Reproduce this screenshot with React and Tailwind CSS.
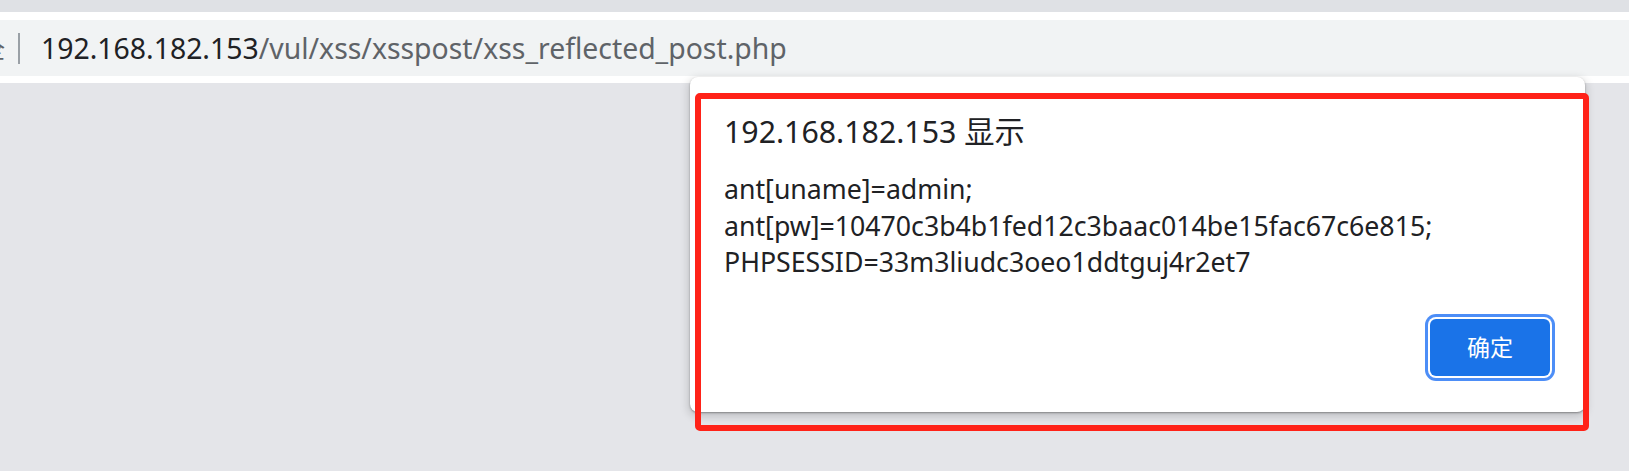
import React from 'react';

const sans = "font-['Noto_Sans','Noto_Sans_CJK_SC',sans-serif]";

function AddressBar() {
  return (
    <div className="h-[56px] bg-[#f1f3f4] flex items-center overflow-hidden">
      <span className="ml-[-19px] text-[24px] leading-none text-[#5f6368] font-['Noto_Sans_CJK_SC',sans-serif]">全</span>
      <div className="ml-[13px] w-[2px] h-[31px] bg-[#9aa0a6]" />
      <div className="ml-[21px] text-[28.4px] leading-none whitespace-nowrap">
        <span className="text-[#202124]">192.168.182.153</span>
        <span className="text-[#5f6368]">/vul/xss/xsspost/xss_reflected_post.php</span>
      </div>
    </div>
  );
}

function AlertDialog() {
  return (
    <div className="absolute left-[690px] top-[77px] w-[895px] h-[335px] bg-white rounded-[8px] shadow-[0_1px_2px_rgba(0,0,0,0.35),0_3px_8px_2px_rgba(0,0,0,0.15)] flex flex-col pt-[35px] pl-[34px] pr-[35px] pb-[36px]">
      <div className="text-[30.3px] leading-[40px] text-[#202124]">192.168.182.153 显示</div>
      <div className="mt-[19px] text-[26.7px] leading-[36.5px] text-[#202124]">
        <div>ant[uname]=admin;</div>
        <div>ant[pw]=10470c3b4b1fed12c3baac014be15fac67c6e815;</div>
        <div>PHPSESSID=33m3liudc3oeo1ddtguj4r2et7</div>
      </div>
      <div className="mt-auto flex justify-end">
        <button className="w-[120px] h-[57px] rounded-[6px] bg-[#1a73e8] text-white text-[23px] leading-none ring-[3px] ring-[#4d8ef7] ring-offset-2 ring-offset-white">
          确定
        </button>
      </div>
    </div>
  );
}

export default function App() {
  return (
    <div className={`relative w-[1629px] h-[471px] bg-[#e4e5e9] overflow-hidden flex flex-col ${sans}`}>
      <div className="h-[12px] bg-[#dfe1e5]" />
      <div className="h-[8px] bg-white" />
      <AddressBar />
      <div className="h-[7px] bg-white" />
      <div className="flex-1" />
      <AlertDialog />
      {/* red annotation box drawn over the screenshot */}
      <div className="absolute left-[695px] top-[93px] w-[894px] h-[338px] border-[6px] border-[#ff2218] rounded-[5px] pointer-events-none" />
    </div>
  );
}
